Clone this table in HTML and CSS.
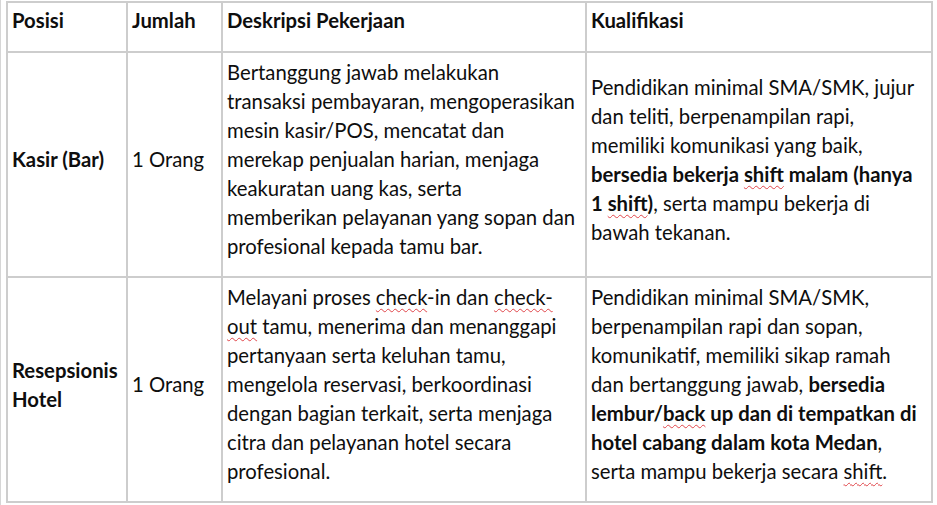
FILE: index.html
```html
<!DOCTYPE html>
<html lang="id">
<head>
<meta charset="utf-8">
<title>Lowongan</title>
<link rel="stylesheet" href="styles.css">
</head>
<body>
<div class="page">
<table class="jobs">
  <colgroup>
    <col class="c-pos"><col class="c-jml"><col class="c-desc"><col class="c-kual">
  </colgroup>
  <thead>
    <tr>
      <th>Posisi</th>
      <th>Jumlah</th>
      <th>Deskripsi Pekerjaan</th>
      <th>Kualifikasi</th>
    </tr>
  </thead>
  <tbody>
    <tr>
      <td class="pos">Kasir (Bar)</td>
      <td>1 Orang</td>
      <td>Bertanggung jawab melakukan<br>transaksi pembayaran, mengoperasikan<br>mesin kasir/POS, mencatat dan<br>merekap penjualan harian, menjaga<br>keakuratan uang kas, serta<br>memberikan pelayanan yang sopan dan<br>profesional kepada tamu bar.</td>
      <td>Pendidikan minimal SMA/SMK, jujur<br>dan teliti, berpenampilan rapi,<br>memiliki komunikasi yang baik,<br><b>bersedia bekerja <span class="sp">shift</span> malam (hanya<br>1 <span class="sp">shift</span>)</b>, serta mampu bekerja di<br>bawah tekanan.</td>
    </tr>
    <tr>
      <td class="pos">Resepsionis<br>Hotel</td>
      <td>1 Orang</td>
      <td>Melayani proses <span class="sp">check</span>-in dan <span class="sp">check-</span><br><span class="sp">out</span> tamu, menerima dan menanggapi<br>pertanyaan serta keluhan tamu,<br>mengelola reservasi, berkoordinasi<br>dengan bagian terkait, serta menjaga<br>citra dan pelayanan hotel secara<br>profesional.</td>
      <td>Pendidikan minimal SMA/SMK,<br>berpenampilan rapi dan sopan,<br>komunikatif, memiliki sikap ramah<br>dan bertanggung jawab, <b>bersedia<br>lembur/<span class="sp">back</span> up dan di tempatkan di<br>hotel cabang dalam kota Medan</b>,<br>serta mampu bekerja secara <span class="sp">shift</span>.</td>
    </tr>
  </tbody>
</table>
</div>
</body>
</html>
```

FILE: styles.css
```css
html, body {
  margin: 0;
  padding: 0;
  background: #ffffff;
}

.page {
  padding: 1px 0 0 5px;
  width: 937px;
  height: 505px;
  box-sizing: border-box;
  border-left: 1px solid #d6d6d6;
  overflow: hidden;
}

.jobs {
  border-collapse: collapse;
  table-layout: fixed;
  width: 925px;
  font-family: Lato, "Open Sans", sans-serif;
  font-size: 20.3px;
  line-height: 29px;
  color: #0e0e0e;
  white-space: nowrap;
  border: 2px solid #bdbdbd;
}

.c-pos { width: 120px; }
.c-jml { width: 95px; }
.c-desc { width: 364px; }
.c-kual { width: 346px; }

.jobs th,
.jobs td {
  border: 2px solid #cdcdcd;
  padding: 5px 4px 15px 4px;
  text-align: left;
  overflow: hidden;
}

.jobs th {
  padding: 3px 4px 16px 4px;
  vertical-align: top;
  font-weight: 700;
}

.jobs td {
  vertical-align: middle;
}

.jobs td.pos {
  font-weight: 700;
}

.jobs b {
  font-weight: 700;
}

.sp {
  text-decoration: underline wavy #e0454a;
  text-decoration-thickness: 1px;
  text-underline-offset: 3px;
}
```
